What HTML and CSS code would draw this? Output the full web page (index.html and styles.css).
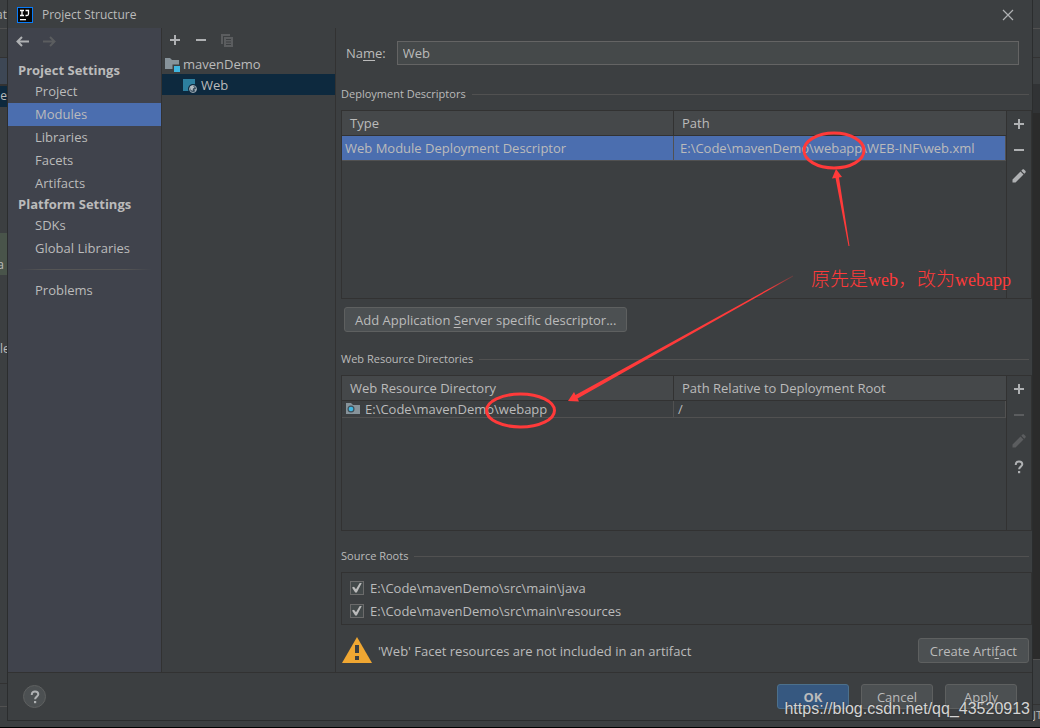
FILE: index.html
```html
<!DOCTYPE html>
<html lang="en">
<head>
<meta charset="utf-8">
<title>Project Structure</title>
<link rel="stylesheet" href="styles.css">
</head>
<body>
<svg class="defs" aria-hidden="true">
  <symbol id="plus" viewBox="0 0 16 16"><path d="M7 3h2v4h4v2H9v4H7V9H3V7h4z" fill="currentColor"/></symbol>
  <symbol id="minus" viewBox="0 0 16 16"><path d="M3 7h10v2H3z" fill="currentColor"/></symbol>
  <symbol id="pencil" viewBox="0 0 16 16"><path d="M1.500 11.500 9.500 3.500l3 3-8 8h-3zM10.300 2.700l1-1c.6-.6 1.300-.6 1.900 0l1.100 1.100c.6.6.6 1.300 0 1.900l-1 1z" fill="currentColor"/></symbol>
  <symbol id="arrow" viewBox="0 0 14 12"><path d="M6 1 1.500 5.500 6 10M2 5.500h11" fill="none" stroke="currentColor" stroke-width="2"/></symbol>
  <symbol id="help" viewBox="0 0 16 16"><path d="M4.800 6V5.500C4.800 3.700 6.100 2.500 8 2.500s3.300 1.100 3.300 2.800C11.300 7.600 8.100 7.600 8.100 10.200" fill="none" stroke="currentColor" stroke-width="2"/><path d="M7 12h2.200v2.200H7z" fill="currentColor"/></symbol>
</svg>
<div class="desktop">
  <div class="edge edge-left" aria-hidden="true">
    <div class="edge-head">at</div>
    <div class="edge-bar"></div>
    <div class="edge-tab"></div>
    <div class="edge-selected">e</div>
    <div class="edge-space"></div>
    <div class="edge-green">a</div>
    <div class="edge-tail">le</div>
    <div class="edge-foot"></div>
  </div>

  <section class="dialog" aria-label="Project Structure">
    <header class="titlebar">
      <svg class="logo" viewBox="0 0 16 16"><rect x=".5" y=".5" width="15" height="15" fill="#080808" stroke="#087cfa"/><path d="M3 3.500h4M5 3.500v5M3 8.500h4M8.500 3.500h3v3.500q0 1.500-1.500 1.500h-1.500" fill="none" stroke="#fff" stroke-width="1.300"/><path d="M3 12h6v1.300H3z" fill="#fff"/></svg>
      <h1>Project Structure</h1>
      <button class="close" aria-label="Close"><svg viewBox="0 0 12 12"><path d="m1 1 10 10M11 1 1 11" stroke="currentColor" stroke-width="1.200"/></svg></button>
    </header>

    <div class="content">
      <nav class="sidebar">
        <div class="history">
          <button aria-label="Back"><svg><use href="#arrow"/></svg></button>
          <button class="forward" aria-label="Forward" disabled><svg><use href="#arrow"/></svg></button>
        </div>
        <h2>Project Settings</h2>
        <ul>
          <li><a href="#">Project</a></li>
          <li><a href="#" class="current" aria-current="page">Modules</a></li>
          <li><a href="#">Libraries</a></li>
          <li><a href="#">Facets</a></li>
          <li><a href="#">Artifacts</a></li>
        </ul>
        <h2>Platform Settings</h2>
        <ul>
          <li><a href="#">SDKs</a></li>
          <li><a href="#">Global Libraries</a></li>
        </ul>
        <hr>
        <ul>
          <li><a href="#">Problems</a></li>
        </ul>
      </nav>

      <div class="modules">
        <div class="toolbar">
          <button aria-label="Add"><svg><use href="#plus"/></svg></button>
          <button aria-label="Remove"><svg><use href="#minus"/></svg></button>
          <button aria-label="Copy" disabled><svg viewBox="0 0 16 16"><path d="M2 2h9v2H4v8H2z" fill="currentColor"/><path d="M5 5h9v10H5zM7 7v1h5V7zm0 2.500v1h5v-1zM7 12v1h5v-1z" fill="currentColor" fill-rule="evenodd"/></svg></button>
        </div>
        <ul class="tree">
          <li class="node"><svg viewBox="0 0 16 16"><path d="M1 2h5l2 2h7v9H1z" fill="#87939a"/><path d="M8.500 8.500H16V16H8.500z" fill="#3c3f41"/><path d="M10 10h6v6h-6z" fill="#40b6e0"/></svg>mavenDemo</li>
          <li class="node child selected"><svg viewBox="0 0 16 16"><path d="M1 2h12v12H1z" fill="#2d7f9f"/><circle cx="11" cy="12" r="5" fill="#0d293e"/><circle cx="11" cy="12" r="3.500" fill="#34495a" stroke="#9aa7b0"/><path d="m8 9.500 2.500-1 2 2-1.500 1-.5 2.500-2-1.500zM12.500 12l2 .5-1.500 2z" fill="#b5bec4"/></svg>Web</li>
        </ul>
      </div>

      <main class="facet">
        <div class="name-row">
          <label for="name">Na<u>m</u>e:</label>
          <input id="name" type="text" value="Web">
        </div>

        <h3>Deployment Descriptors</h3>
        <div class="panel descriptors">
          <div class="table-area">
            <table>
              <thead><tr><th>Type</th><th>Path</th></tr></thead>
              <tbody><tr class="selected"><td>Web Module Deployment Descriptor</td><td>E:\Code\mavenDemo\webapp\WEB-INF\web.xml</td></tr></tbody>
            </table>
          </div>
          <div class="actions">
            <button aria-label="Add descriptor"><svg><use href="#plus"/></svg></button>
            <button aria-label="Remove descriptor"><svg><use href="#minus"/></svg></button>
            <button aria-label="Edit descriptor"><svg><use href="#pencil"/></svg></button>
          </div>
        </div>
        <button class="btn add-server">Add Application <u>S</u>erver specific descriptor...</button>

        <h3>Web Resource Directories</h3>
        <div class="panel resources">
          <div class="table-area">
            <table>
              <thead><tr><th>Web Resource Directory</th><th>Path Relative to Deployment Root</th></tr></thead>
              <tbody><tr><td><span class="folder-cell"><svg viewBox="0 0 16 16"><path d="M1 2h5l2 2h7v9H1z" fill="#87939a"/><circle cx="6" cy="8" r="3.500" fill="#3c4f59"/><circle cx="6" cy="8" r="2.300" fill="#40b6e0"/></svg>E:\Code\mavenDemo\webapp</span></td><td>/</td></tr></tbody>
            </table>
          </div>
          <div class="actions">
            <button aria-label="Add directory"><svg><use href="#plus"/></svg></button>
            <button aria-label="Remove directory" disabled><svg><use href="#minus"/></svg></button>
            <button aria-label="Edit directory" disabled><svg><use href="#pencil"/></svg></button>
            <button aria-label="Directory help"><svg><use href="#help"/></svg></button>
          </div>
        </div>

        <h3>Source Roots</h3>
        <div class="roots">
          <label><input type="checkbox" checked>E:\Code\mavenDemo\src\main\java</label>
          <label><input type="checkbox" checked>E:\Code\mavenDemo\src\main\resources</label>
        </div>

        <div class="warning">
          <svg viewBox="0 0 30 27"><path d="M15 0 30 26H0z" fill="#f0a732"/><path d="M13 8h4v8h-4zm0 11h4v4h-4z" fill="#3c3f41"/></svg>
          <p>'Web' Facet resources are not included in an artifact</p>
          <button class="btn">Create Arti<u>f</u>act</button>
        </div>
      </main>
    </div>

    <footer class="footer">
      <button class="help" aria-label="Help"><svg><use href="#help"/></svg></button>
      <button class="btn primary">OK</button>
      <button class="btn">Cancel</button>
      <button class="btn">Apply</button>
    </footer>
  </section>

  <div class="edge edge-right" aria-hidden="true">
    <div class="edge-head"></div>
    <div class="edge-bar"></div>
    <div class="edge-tab"></div>
    <div class="edge-editor-top"></div>
    <div class="edge-editor"></div>
    <div class="edge-panel"></div>
    <div class="edge-status">JT</div>
  </div>

  <svg class="marks" viewBox="0 0 1040 728" aria-hidden="true">
    <defs><linearGradient id="fade" gradientUnits="userSpaceOnUse" x1="800" y1="272" x2="768" y2="290"><stop offset="0" stop-color="#ff3a3a" stop-opacity="0"/><stop offset="1" stop-color="#ff3a3a"/></linearGradient></defs>
    <g fill="none" stroke="#ff3a3a" stroke-width="3">
      <ellipse cx="834" cy="150.500" rx="30" ry="17.500"/>
      <ellipse cx="520.500" cy="410.500" rx="34" ry="16.500"/>
    </g>
    <path d="m836 169 6 8-3 .5L849.500 246h-1L835.500 178l-3.500.5z" fill="#ff3a3a"/>
    <path d="m568 401 6-9 1.500 3L793 275.500v1L577.500 398.500l1.500 3z" fill="url(#fade)"/>
  </svg>
  <p class="note" lang="zh">原先是<span>web</span>，改为<span>webapp</span></p>
  <p class="watermark">https://blog.csdn.net/qq_43520913</p>
</div>
</body>
</html>
```
FILE: styles.css
```css
* { box-sizing: border-box; }

body {
  margin: 0;
  background: #3c3f41;
  color: #bbbbbb;
  font: 13px/20px "Open Sans", "Noto Sans", sans-serif;
}

h1, h2, h3, p, ul { margin: 0; padding: 0; font-weight: 400; }
ul { list-style: none; }
u { text-underline-offset: 2px; }

button {
  padding: 0;
  border: 0;
  background: none;
  color: #afb1b3;
  font: inherit;
}
button:disabled { color: #5b5d5f; }
svg { display: block; flex: none; width: 16px; height: 16px; }
.defs { display: none; }

.desktop {
  position: relative;
  display: flex;
  min-height: 100vh;
  padding-bottom: 6px;
  border-bottom: 1px solid #000000;
  overflow: hidden;
}

/* Slivers of the IDE window behind the dialog */
.edge {
  display: flex;
  flex-direction: column;
  flex: none;
  width: 7px;
  font-size: 12px;
  overflow: hidden;
}
.edge > div { display: flex; flex: none; justify-content: flex-end; }
.edge-head { height: 29px; padding-top: 5px; border-bottom: 1px solid #515151; }
.edge-bar { height: 29px; border-bottom: 1px solid #323232; }
.edge-tab { height: 26px; }
.edge-left .edge-tab { background: #3d4755; }
.edge-left .edge-selected { height: 23px; border-top: 2px solid #323232; background: #0d293e; }
.edge-space { height: 126px; }
.edge-left .edge-green { height: 42px; padding: 22px 3px 0 0; background: #49544a; }
.edge > .edge-tail { justify-content: flex-start; padding-top: 64px; height: 409px; border-bottom: 1px solid #323232; }
.edge-foot { height: 23px; border-bottom: 1px solid #515151; }
.edge-editor-top { height: 29px; background: #313335; }
.edge > .edge-editor { flex: 1; background: #2b2b2b; }
.edge-panel { height: 46px; border-top: 1px solid #515151; border-bottom: 1px solid #323232; }
.edge > .edge-status { justify-content: flex-start; height: 16px; font-size: 11px; }

.dialog {
  display: flex;
  flex-direction: column;
  flex: 1;
  min-width: 0;
  border: solid #2b2d2e;
  border-width: 0 1px 1px;
}

.titlebar {
  display: flex;
  align-items: center;
  gap: 9px;
  height: 28px;
  padding: 1px 18px 0 9px;
}
.titlebar h1 { flex: 1; font-size: 12px; }
.close svg { width: 12px; height: 12px; }

.content { display: flex; flex: 1; border-bottom: 1px solid #323232; }

.sidebar {
  flex: none;
  width: 154px;
  border-right: 1px solid #323232;
  background: #40434c;
}
.history { display: flex; gap: 12px; padding: 8px 8px 13px; }
.history svg { width: 14px; height: 12px; }
.forward { transform: scaleX(-1); }
.sidebar h2 { padding-left: 10px; font-size: 13px; line-height: 19px; font-weight: 700; }
.sidebar a {
  display: block;
  padding-left: 27px;
  color: inherit;
  line-height: 23px;
  text-decoration: none;
}
.sidebar .current { background: #4b6eaf; }
.sidebar hr {
  height: 1px;
  margin: 9px;
  border: 0;
  background: linear-gradient(to right, transparent, #555555 20%, #555555 80%, transparent);
}

.modules { flex: none; width: 174px; border-right: 1px solid #323232; }
.toolbar { display: flex; gap: 10px; padding: 4px 5px 5px; }
.node { display: flex; align-items: center; gap: 3px; height: 21px; padding-left: 2px; }
.child { padding-left: 20px; }
.node.selected { background: #0d293e; }

.facet { flex: 1; min-width: 0; padding-left: 5px; }

.name-row { display: flex; align-items: center; gap: 11px; padding: 13px 13px 0 5px; }
.name-row input {
  flex: 1;
  min-width: 0;
  height: 24px;
  padding: 0 5px;
  border: 1px solid #646464;
  background: #45494a;
  color: inherit;
  font: inherit;
}

h3 { display: flex; align-items: center; gap: 6px; font-size: 11px; line-height: 20px; }
h3::after { content: ""; flex: 1; height: 1px; margin-right: 3px; background: #515151; }
.name-row + h3 { margin-top: 19px; }
h3 + div { margin-top: 6px; border: 1px solid #323232; }

.panel { display: flex; }
.descriptors { height: 189px; }
.resources { height: 156px; }
.table-area { flex: 1; min-width: 0; }
table { width: 100%; border-collapse: separate; border-spacing: 0; table-layout: fixed; }
th, td { padding: 0; font-weight: 400; text-align: left; white-space: nowrap; }
th {
  height: 25px;
  padding-left: 8px;
  border-right: 1px solid #323232;
  border-bottom: 1px solid #323232;
  background: #45484a;
}
th:last-child { border-right: 0; }
td { height: 17px; padding-left: 3px; border: solid #515151; border-width: 0 1px 1px 0; line-height: 16px; }
td + td { padding-left: 6px; }
.selected td { height: 25px; background: #4b6eaf; line-height: 24px; }
.resources td + td { padding-left: 4px; }
.folder-cell { display: flex; align-items: center; gap: 4px; }

.actions {
  display: flex;
  flex-direction: column;
  align-items: center;
  gap: 10px;
  width: 25px;
  padding-top: 5px;
  border-left: 1px solid #323232;
}

.btn {
  min-width: 72px;
  height: 25px;
  border: 1px solid #5e6060;
  border-radius: 3px;
  background: #4c5052;
  color: #bbbbbb;
}
.add-server { display: block; margin: 8px 3px 17px; padding: 0 10px; }
.resources + h3 { margin-top: 15px; }

.roots { display: flex; flex-direction: column; padding: 3px 8px 2px; }
.roots label { display: flex; align-items: center; gap: 6px; height: 23px; }
.roots input {
  display: grid;
  place-items: center;
  appearance: none;
  width: 14px;
  height: 14px;
  margin: 0;
  border: 1px solid #6b6b6b;
  background: #43494a;
}
.roots input:checked::before {
  content: "";
  width: 10px;
  height: 10px;
  background: #bbbbbb;
  clip-path: polygon(0 50%, 20% 42%, 40% 68%, 80% 0, 100% 0, 48% 100%, 32% 100%);
}

.warning { display: flex; align-items: center; gap: 6px; padding: 12px 3px 8px 1px; }
.warning svg { width: 30px; height: 27px; }
.warning p { flex: 1; }
.warning .btn { padding: 0 11px; }

.footer { display: flex; align-items: center; gap: 12px; height: 47px; padding: 0 15px; }
.help {
  display: grid;
  place-items: center;
  width: 23px;
  height: 23px;
  margin-right: auto;
  border: 1px solid #5e6060;
  border-radius: 50%;
  background: #4c5052;
}
.primary { border-color: #4c708c; background: #365880; font-weight: 700; }

/* Annotations over the window */
.marks { position: absolute; top: 0; left: 0; width: 1040px; height: 728px; pointer-events: none; }
.note {
  position: absolute;
  top: 266px;
  left: 811px;
  color: #ff3a3a;
  font: 19px/24px "Noto Sans CJK SC", sans-serif;
  font-weight: 300;
  white-space: nowrap;
}
.note span { font: 18px/24px "Liberation Serif", serif; }
.watermark {
  position: absolute;
  right: 10px;
  bottom: 8px;
  color: #d4d4d4;
  font: 16px/20px "Liberation Sans", sans-serif;
  text-shadow: 0 0 2px #333333;
}
```
